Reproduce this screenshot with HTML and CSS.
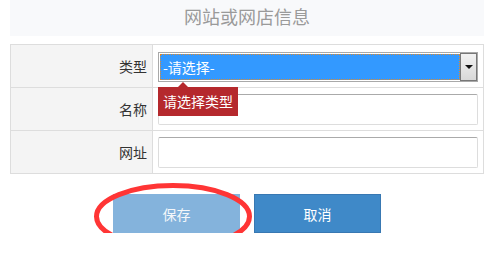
FILE: index.html
```html
<!DOCTYPE html>
<html lang="zh-CN">
<head>
    <meta charset="UTF-8">
    <title>网站或网店信息</title>
    <link rel="stylesheet" href="styles.css">
</head>
<body>
    <div class="page">
        <div class="title">网站或网店信息</div>
        <table class="info-table">
            <tr>
                <td class="label">类型</td>
                <td class="field">
                    <div class="select-wrap">
                        <div class="select">
                            <span class="select-value">-请选择-</span>
                            <span class="select-btn"><span class="caret"></span></span>
                        </div>
                        <div class="tip">请选择类型</div>
                    </div>
                </td>
            </tr>
            <tr>
                <td class="label">名称</td>
                <td class="field"><input type="text" class="text-input"></td>
            </tr>
            <tr>
                <td class="label">网址</td>
                <td class="field"><input type="text" class="text-input"></td>
            </tr>
        </table>
        <div class="actions">
            <div class="btn-wrap">
                <button class="btn btn-save">保存</button>
                <svg class="mark" width="158" height="67" viewBox="0 0 158 67">
                    <ellipse cx="79" cy="33.5" rx="76.5" ry="31" fill="none" stroke="#ff3535" stroke-width="5"/>
                </svg>
            </div>
            <button class="btn btn-cancel">取消</button>
        </div>
    </div>
</body>
</html>
```

FILE: styles.css
```css
body {
    margin: 0;
    padding: 0;
    background: #fff;
    font-family: "Noto Sans CJK SC", "Liberation Sans", sans-serif;
    color: #333;
}
.page {
    padding: 0 12px 0 10px;
}
.title {
    height: 36px;
    line-height: 33px;
    background: #f8f9fb;
    text-align: center;
    font-size: 18px;
    color: #9a9a9a;
}
.info-table {
    width: 474px;
    margin-top: 8px;
    border-collapse: collapse;
}
.info-table td {
    border: 1px solid #ddd;
    height: 43px;
    padding: 0;
    box-sizing: border-box;
}
.info-table .label {
    width: 143px;
    background: #f4f4f4;
    text-align: right;
    padding-right: 5px;
    font-size: 14px;
}
.info-table .field {
    padding: 0 5px;
}
.select-wrap {
    position: relative;
    width: 320px;
    top: 1px;
}
.select {
    display: flex;
    border: 1px solid #a9a9a9;
    padding: 1px 0 1px 1px;
    box-sizing: border-box;
    height: 30px;
}
.select-value {
    flex: 1;
    background: #3399ff;
    color: #fff;
    font-size: 14px;
    line-height: 26px;
    padding-left: 3px;
    outline: 1px dotted #e08a2c;
    outline-offset: -1px;
}
.select-btn {
    width: 15px;
    margin: -1px 0;
    border: 1px solid #777;
    background: linear-gradient(#f2f2f2, #d8d8d8);
    display: flex;
    align-items: center;
    justify-content: center;
}
.caret {
    width: 0;
    height: 0;
    border-left: 4px solid transparent;
    border-right: 4px solid transparent;
    border-top: 4px solid #111;
}
.tip {
    position: absolute;
    top: 35px;
    left: 0;
    width: 80px;
    height: 29px;
    line-height: 28px;
    background: #b5292d;
    color: #fff;
    font-size: 14px;
    padding-left: 5px;
    box-sizing: border-box;
    z-index: 2;
}
.tip::before {
    content: "";
    position: absolute;
    top: -5px;
    left: 20px;
    border-left: 5px solid transparent;
    border-right: 5px solid transparent;
    border-bottom: 5px solid #b5292d;
}
.text-input {
    display: block;
    width: 320px;
    height: 31px;
    box-sizing: border-box;
    border: 1px solid #ddd;
    border-top-color: #aaa;
    border-radius: 2px;
    font-size: 14px;
    padding: 0 5px;
}
.actions {
    display: flex;
    justify-content: center;
    gap: 14px;
    margin-top: 20px;
}
.btn-wrap {
    position: relative;
}
.btn {
    display: block;
    width: 127px;
    height: 39px;
    border: 1px solid transparent;
    font-family: inherit;
    font-size: 14px;
    color: #fff;
    padding: 0;
}
.btn-save {
    background: #84b3dc;
    border-color: #84b3dc;
    color: #f4f7fa;
}
.btn-cancel {
    background: #3f89c8;
    border-color: #3878b2;
}
.mark {
    position: absolute;
    left: -19px;
    top: -11px;
}
```
